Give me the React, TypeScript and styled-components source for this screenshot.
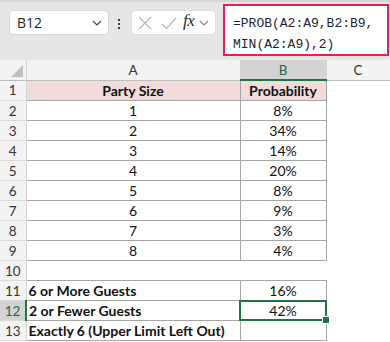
import React from 'react'
import styled, { createGlobalStyle, css } from 'styled-components'

const GlobalStyle = createGlobalStyle`
  html, body {
    margin: 0;
    padding: 0;
    background: #ffffff;
  }
  body {
    width: 390px;
    height: 342px;
    overflow: hidden;
    font-family: Lato, "Open Sans", sans-serif;
  }
`

const Page = styled.div`
  display: flex;
  flex-direction: column;
  width: 390px;
  height: 342px;
  overflow: hidden;
`

const Toolbar = styled.div`
  display: flex;
  align-items: flex-start;
  height: 60px;
  box-sizing: border-box;
  background: #e6e6e6;
  border-top: 2px solid #d6d6d6;
  padding: 2px 1px 0 9px;
`

const NameBox = styled.div`
  display: flex;
  align-items: center;
  justify-content: space-between;
  box-sizing: border-box;
  width: 100px;
  height: 25px;
  margin-top: 6px;
  padding: 0 6px 0 7px;
  background: #ffffff;
  border: 1px solid #d8d8d8;
  border-radius: 4px;
  font-family: "Open Sans", sans-serif;
  font-size: 14px;
  color: #1f1f1f;
`

const Dots = styled.div`
  display: flex;
  flex-direction: column;
  gap: 2px;
  width: 4px;
  margin: 15px 9px 0 9px;

  span {
    width: 2px;
    height: 2px;
    background: #404040;
  }
`

const FuncBox = styled.div`
  display: flex;
  align-items: center;
  box-sizing: border-box;
  width: 85px;
  height: 25px;
  margin-top: 6px;
  padding: 0 4px 0 6px;
  background: #ffffff;
  border: 1px solid #dedede;
  border-radius: 4px;
`

const FxLabel = styled.span`
  font-family: "Liberation Serif", serif;
  font-style: italic;
  font-size: 17px;
  color: #2b2b2b;
  margin: 0 5px 3px 6px;
  letter-spacing: -0.5px;
`

const FormulaInput = styled.div`
  flex: 1;
  box-sizing: border-box;
  height: 52px;
  margin-left: 7px;
  padding: 7px 0 0 8px;
  background: #ffffff;
  border: 2px solid #e8204f;
  font-family: "Liberation Mono", monospace;
  font-size: 13px;
  line-height: 21px;
  color: #1c2434;
  white-space: pre;
`

const Sheet = styled.table`
  border-collapse: collapse;
  table-layout: fixed;
  width: 390px;
  font-size: 14px;
  color: #111111;
`

const ColHead = styled.th<{ $active?: boolean }>`
  height: 19px;
  padding: 0;
  font-weight: 400;
  font-size: 13.5px;
  text-align: center;
  background: #f3f3f3;
  color: #333333;
  border-right: 1px solid #d4d4d4;
  border-bottom: 1px solid #bdbdbd;
  ${(p) =>
    p.$active &&
    css`
      background: #d3d3d3;
      color: #1c6b3d;
      border-bottom: 2px solid #217346;
    `}
`

const Corner = styled.th`
  position: relative;
  padding: 0;
  background: #f3f3f3;
  border-right: 1px solid #d4d4d4;
  border-bottom: 1px solid #bdbdbd;

  &::after {
    content: '';
    position: absolute;
    right: 3px;
    bottom: 3px;
    border-style: solid;
    border-width: 0 0 12px 12px;
    border-color: transparent transparent #bfbfbf transparent;
  }
`

const RowHead = styled.th<{ $active?: boolean }>`
  height: 19px;
  padding: 0;
  font-weight: 400;
  font-size: 13.5px;
  text-align: center;
  background: #f3f3f3;
  color: #333333;
  border-right: 1px solid #d4d4d4;
  border-bottom: 1px solid #d9d9d9;
  ${(p) =>
    p.$active &&
    css`
      background: #d3d3d3;
      color: #1c6b3d;
      border-right: 2px solid #217346;
    `}
`

const Cell = styled.td<{ $boxed?: boolean; $head?: boolean; $align?: 'left' | 'center'; $bold?: boolean; $active?: boolean }>`
  position: relative;
  height: 19px;
  padding: 0 2px;
  text-align: ${(p) => p.$align || 'center'};
  font-weight: ${(p) => (p.$bold || p.$head ? 700 : 400)};
  white-space: nowrap;
  overflow: visible;
  line-height: 19px;
  ${(p) =>
    p.$boxed &&
    css`
      border: 1px solid #a6a6a6;
    `}
  ${(p) =>
    p.$head &&
    css`
      background: #f2dcdb;
    `}
  ${(p) =>
    p.$active &&
    css`
      &::after {
        content: '';
        position: absolute;
        inset: -1px -1px -1px -2px;
        border: 2px solid #217346;
        pointer-events: none;
      }
      &::before {
        content: '';
        position: absolute;
        right: -4px;
        bottom: -4px;
        width: 6px;
        height: 6px;
        background: #217346;
        border: 1px solid #ffffff;
        z-index: 2;
      }
    `}
`

const Chevron = ({ color = '#555' }: { color?: string }) => (
  <svg width="10" height="6" viewBox="0 0 10 6">
    <path d="M1 1l4 4 4-4" fill="none" stroke={color} strokeWidth="1.2" />
  </svg>
)

const parties = [
  ['1', '8%'],
  ['2', '34%'],
  ['3', '14%'],
  ['4', '20%'],
  ['5', '8%'],
  ['6', '9%'],
  ['7', '3%'],
  ['8', '4%'],
]

const summary = [
  ['6 or More Guests', '16%'],
  ['2 or Fewer Guests', '42%'],
  ['Exactly 6 (Upper Limit Left Out)', ''],
]

export default function App() {
  return (
    <Page>
      <GlobalStyle />
      <Toolbar>
        <NameBox>
          <span>B12</span>
          <Chevron color="#444" />
        </NameBox>
        <Dots>
          <span />
          <span />
          <span />
        </Dots>
        <FuncBox>
          <svg width="14" height="14" viewBox="0 0 14 14">
            <path d="M1 1l12 12M13 1L1 13" stroke="#b8b8b8" strokeWidth="1.2" />
          </svg>
          <svg width="16" height="14" viewBox="0 0 16 14" style={{ marginLeft: 9 }}>
            <path d="M1 8l4.5 4.5L15 2" fill="none" stroke="#b8b8b8" strokeWidth="1.2" />
          </svg>
          <FxLabel>fx</FxLabel>
          <Chevron color="#888" />
        </FuncBox>
        <FormulaInput>{'=PROB(A2:A9,B2:B9,\nMIN(A2:A9),2)'}</FormulaInput>
      </Toolbar>
      <Sheet>
        <colgroup>
          <col style={{ width: 26 }} />
          <col style={{ width: 214 }} />
          <col style={{ width: 86 }} />
          <col style={{ width: 64 }} />
        </colgroup>
        <thead>
          <tr>
            <Corner />
            <ColHead>A</ColHead>
            <ColHead $active>B</ColHead>
            <ColHead>C</ColHead>
          </tr>
        </thead>
        <tbody>
          <tr>
            <RowHead>1</RowHead>
            <Cell $boxed $head>Party Size</Cell>
            <Cell $boxed $head>Probability</Cell>
            <Cell />
          </tr>
          {parties.map(([size, prob], i) => (
            <tr key={size}>
              <RowHead>{i + 2}</RowHead>
              <Cell $boxed>{size}</Cell>
              <Cell $boxed>{prob}</Cell>
              <Cell />
            </tr>
          ))}
          <tr>
            <RowHead>10</RowHead>
            <Cell />
            <Cell />
            <Cell />
          </tr>
          {summary.map(([label, value], i) => (
            <tr key={label}>
              <RowHead $active={i === 1}>{i + 11}</RowHead>
              <Cell $boxed $bold $align="left">{label}</Cell>
              <Cell $boxed $active={i === 1}>{value}</Cell>
              <Cell />
            </tr>
          ))}
        </tbody>
      </Sheet>
    </Page>
  )
}
